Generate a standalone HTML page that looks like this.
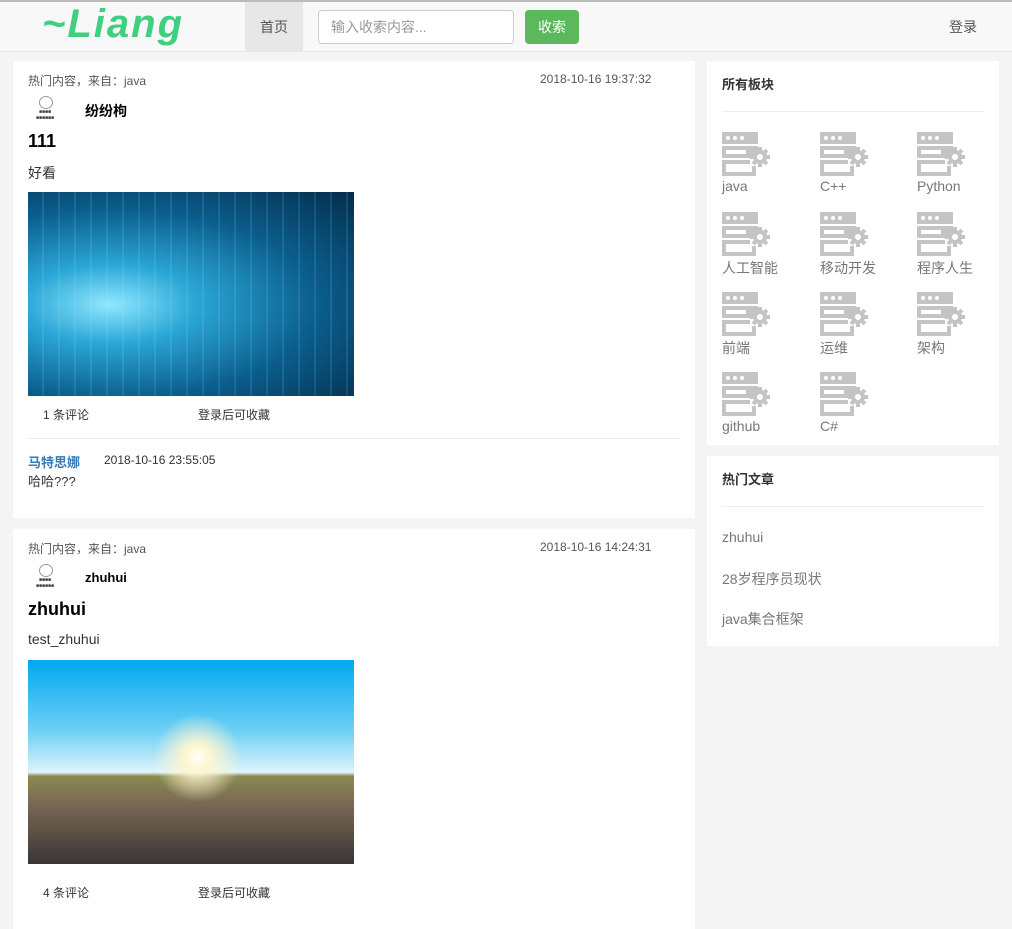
<!DOCTYPE html>
<html><head><meta charset="utf-8"><style>
*{margin:0;padding:0;box-sizing:border-box}
body{width:1012px;height:915px;overflow:hidden;background:#f4f4f4;font-family:"Liberation Sans","Noto Sans CJK SC",sans-serif;font-size:14px;color:#333;position:relative}
.nav{position:absolute;left:0;top:0;width:1012px;height:52px;background:#f8f8f8;border-top:2px solid #bbb;border-bottom:1px solid #e7e7e7}
.logo{position:absolute;left:42px;top:0px;font:italic bold 40px "Liberation Sans",sans-serif;color:#3fcf7f;letter-spacing:2px}
.home{position:absolute;left:245px;top:0;width:58px;height:50px;background:#e7e7e7;color:#555;line-height:50px;text-align:center}
.search{position:absolute;left:318px;top:8px;width:196px;height:34px;border:1px solid #ccc;border-radius:4px;background:#fff;color:#999;padding-left:12px;line-height:32px}
.btn{position:absolute;left:525px;top:8px;width:54px;height:34px;background:#5cb85c;border-radius:4px;color:#fff;text-align:center;line-height:34px}
.login{position:absolute;left:949px;top:0;line-height:50px;color:#555}
.card{position:absolute;background:#fff}
.a{position:absolute;font-size:12px;color:#555}
.img{position:absolute;left:15px;width:326px;height:204px}
.icon{position:absolute;width:96px;font-size:14px;color:#777}
.icon svg{display:block}
.hr{position:absolute;left:15px;right:15px;height:1px;background:#eee}
.av{position:absolute;left:18px;top:34px;width:28px;height:28px;font-size:5px;color:#333;text-align:center;line-height:6px;padding-top:14px}
.av:before{content:"";position:absolute;left:8px;top:1px;width:12px;height:11px;border:1px solid #999;border-radius:50%}
</style></head><body>
<div class="nav">
<div class="logo">~Liang</div>
<div class="home">首页</div>
<div class="search">输入收索内容...</div>
<div class="btn">收索</div>
<div class="login">登录</div>
</div>

<div class="card" style="left:13px;top:61px;width:682px;height:457px">
<div class="a" style="left:15px;top:11px">热门内容，来自：java</div>
<div class="a" style="left:527px;top:11px">2018-10-16 19:37:32</div>
<div class="av">■■■■<br>■■■■■■</div>
<div style="position:absolute;left:72px;top:40px;font-weight:bold;color:#000">纷纷枸</div>
<div style="position:absolute;left:15px;top:70px;font-weight:bold;font-size:18px;color:#000">111</div>
<div style="position:absolute;left:15px;top:102px">好看</div>
<div class="img" style="top:131px;background:repeating-linear-gradient(90deg,rgba(255,255,255,0) 0,rgba(255,255,255,0) 14px,rgba(160,230,255,.25) 15px,rgba(255,255,255,0) 16px),radial-gradient(ellipse at 25% 55%,#8fe8ff 0,#2aa6d6 25%,#0a5d8c 60%,#042c4a 100%)"></div>
<div class="a" style="left:30px;top:345px;color:#333">1 条评论</div>
<div class="a" style="left:185px;top:345px;color:#333">登录后可收藏</div>
<div class="hr" style="top:377px"></div>
<div style="position:absolute;left:15px;top:391px;font-weight:bold;color:#337ab7;font-size:13px">马特思娜</div>
<div class="a" style="left:91px;top:392px;color:#333">2018-10-16 23:55:05</div>
<div style="position:absolute;left:15px;top:410px;font-size:13px">哈哈???</div>
</div>

<div class="card" style="left:13px;top:529px;width:682px;height:400px">
<div class="a" style="left:15px;top:11px">热门内容，来自：java</div>
<div class="a" style="left:527px;top:11px">2018-10-16 14:24:31</div>
<div class="av">■■■■<br>■■■■■■</div>
<div style="position:absolute;left:72px;top:41px;font-weight:bold;color:#000;font-size:13px">zhuhui</div>
<div style="position:absolute;left:15px;top:70px;font-weight:bold;font-size:18px;color:#000">zhuhui</div>
<div style="position:absolute;left:15px;top:102px">test_zhuhui</div>
<div class="img" style="top:131px;background:radial-gradient(circle at 52% 48%,#fff 0,#fff6d0 6%,rgba(255,240,200,0) 22%),linear-gradient(#00a8f0 0,#6fd0f5 35%,#dff4fb 55%,#8a8a50 57%,#7a6a55 70%,#3a3535 100%)"></div>
<div class="a" style="left:30px;top:355px;color:#333">4 条评论</div>
<div class="a" style="left:185px;top:355px;color:#333">登录后可收藏</div>
</div>

<div class="card" style="left:707px;top:61px;width:292px;height:384px">
<div style="position:absolute;left:15px;top:13px;font-weight:bold;font-size:13px">所有板块</div>
<div class="hr" style="top:50px"></div>
</div>
<div class="card" style="left:707px;top:456px;width:292px;height:190px">
<div style="position:absolute;left:15px;top:13px;font-weight:bold;font-size:13px">热门文章</div>
<div class="hr" style="top:50px"></div>
<div style="position:absolute;left:15px;top:73px;color:#777">zhuhui</div>
<div style="position:absolute;left:15px;top:113px;color:#777">28岁程序员现状</div>
<div style="position:absolute;left:15px;top:153px;color:#777">java集合框架</div>
</div>

<svg width="0" height="0" style="position:absolute"><defs><g id="ic" fill="#c4c4c4">
<rect x="0" y="0" width="36" height="12"/><rect x="0" y="14" width="36" height="12"/>
<rect x="0" y="28" width="28" height="4"/><rect x="0" y="28" width="4" height="16"/><rect x="0" y="40" width="34" height="4"/><rect x="30" y="34" width="4" height="10"/>
<g fill="#fff"><circle cx="6" cy="6" r="2"/><circle cx="13" cy="6" r="2"/><circle cx="20" cy="6" r="2"/><rect x="4" y="18" width="20" height="4"/></g>
<circle cx="38" cy="25" r="7"/><g stroke="#c4c4c4" stroke-width="4"><line x1="38" y1="15" x2="38" y2="35"/><line x1="28" y1="25" x2="48" y2="25"/><line x1="31" y1="18" x2="45" y2="32"/><line x1="45" y1="18" x2="31" y2="32"/></g><circle cx="38" cy="25" r="3" fill="#fff"/>
</g></defs></svg>

<div class="icon" style="left:722px;top:132px"><svg width="50" height="46"><use href="#ic"/></svg>java</div>
<div class="icon" style="left:820px;top:132px"><svg width="50" height="46"><use href="#ic"/></svg>C++</div>
<div class="icon" style="left:917px;top:132px"><svg width="50" height="46"><use href="#ic"/></svg>Python</div>
<div class="icon" style="left:722px;top:212px"><svg width="50" height="46"><use href="#ic"/></svg>人工智能</div>
<div class="icon" style="left:820px;top:212px"><svg width="50" height="46"><use href="#ic"/></svg>移动开发</div>
<div class="icon" style="left:917px;top:212px"><svg width="50" height="46"><use href="#ic"/></svg>程序人生</div>
<div class="icon" style="left:722px;top:292px"><svg width="50" height="46"><use href="#ic"/></svg>前端</div>
<div class="icon" style="left:820px;top:292px"><svg width="50" height="46"><use href="#ic"/></svg>运维</div>
<div class="icon" style="left:917px;top:292px"><svg width="50" height="46"><use href="#ic"/></svg>架构</div>
<div class="icon" style="left:722px;top:372px"><svg width="50" height="46"><use href="#ic"/></svg>github</div>
<div class="icon" style="left:820px;top:372px"><svg width="50" height="46"><use href="#ic"/></svg>C#</div>
</body></html>
